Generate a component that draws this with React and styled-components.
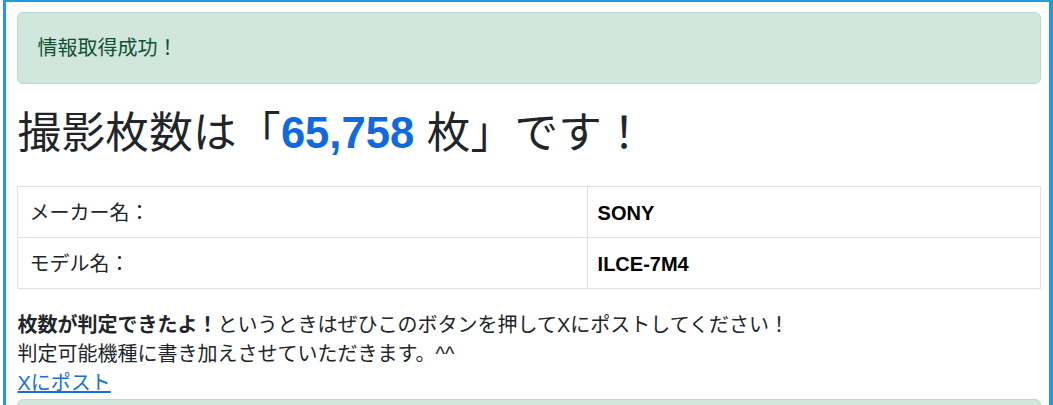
import React from 'react';
import styled, { createGlobalStyle } from 'styled-components';

const GlobalStyle = createGlobalStyle`
  html, body {
    margin: 0;
    padding: 0;
    background: #ffffff;
  }
  body {
    font-family: "Liberation Sans", "Noto Sans CJK JP", sans-serif;
    font-size: 20px;
    line-height: 1.5;
    color: #212529;
  }
`;

const Frame = styled.div`
  margin-left: 3px;
  height: 405px;
  box-sizing: border-box;
  border-style: solid;
  border-color: #1c9dde;
  border-width: 2px 4px 0 3.5px;
  padding: 10px 8px 0 10.5px;
  overflow: hidden;
`;

const Alert = styled.div`
  box-sizing: border-box;
  background: #d1e7dd;
  border: 1.2px solid #badbcc;
  border-radius: 6px;
  color: #0f5132;
  padding: 20.5px 20px;
  line-height: 28.8px;
  margin-bottom: ${(p) => (p.$last ? '0' : '24px')};
  min-height: ${(p) => (p.$last ? '60px' : 'auto')};
`;

const Heading = styled.h1`
  margin: 0 0 28px 1px;
  font-size: 43.6px;
  font-weight: 400;
  line-height: 50px;
  color: #212529;
  letter-spacing: 0.3px;
`;

const Count = styled.span`
  color: #1169e0;
  font-weight: 700;
  letter-spacing: 0;
`;

const InfoTable = styled.table`
  width: 100%;
  border-collapse: collapse;
  margin-bottom: 22px;

  td {
    border: 1px solid #dee2e6;
    height: 51px;
    box-sizing: border-box;
    padding: 2px 12px 0;
    vertical-align: middle;
  }
`;

const Label = styled.td`
  width: 55.7%;
`;

const Value = styled.td`
  font-weight: 700;
  color: #000;
  padding-left: 10px !important;
`;

const Note = styled.p`
  margin: 0 0 0 1px;
  line-height: 29px;
`;

const PostLink = styled.a`
  color: #1a6fd8;
  text-decoration: underline;
  display: inline-block;
  line-height: 29px;
  margin-bottom: 1px;
`;

const App = () => {
  return (
    <>
      <GlobalStyle />
      <Frame>
        <Alert>情報取得成功！</Alert>
        <Heading>
          撮影枚数は「<Count>65,758</Count> 枚」です！
        </Heading>
        <InfoTable>
          <tbody>
            <tr>
              <Label>メーカー名：</Label>
              <Value>SONY</Value>
            </tr>
            <tr>
              <Label>モデル名：</Label>
              <Value>ILCE-7M4</Value>
            </tr>
          </tbody>
        </InfoTable>
        <Note>
          <strong>枚数が判定できたよ！</strong>というときはぜひこのボタンを押してXにポストしてください！
          <br />
          判定可能機種に書き加えさせていただきます。^^
          <br />
          <PostLink href="#">Xにポスト</PostLink>
        </Note>
        <Alert $last />
      </Frame>
    </>
  );
};

export default App;
